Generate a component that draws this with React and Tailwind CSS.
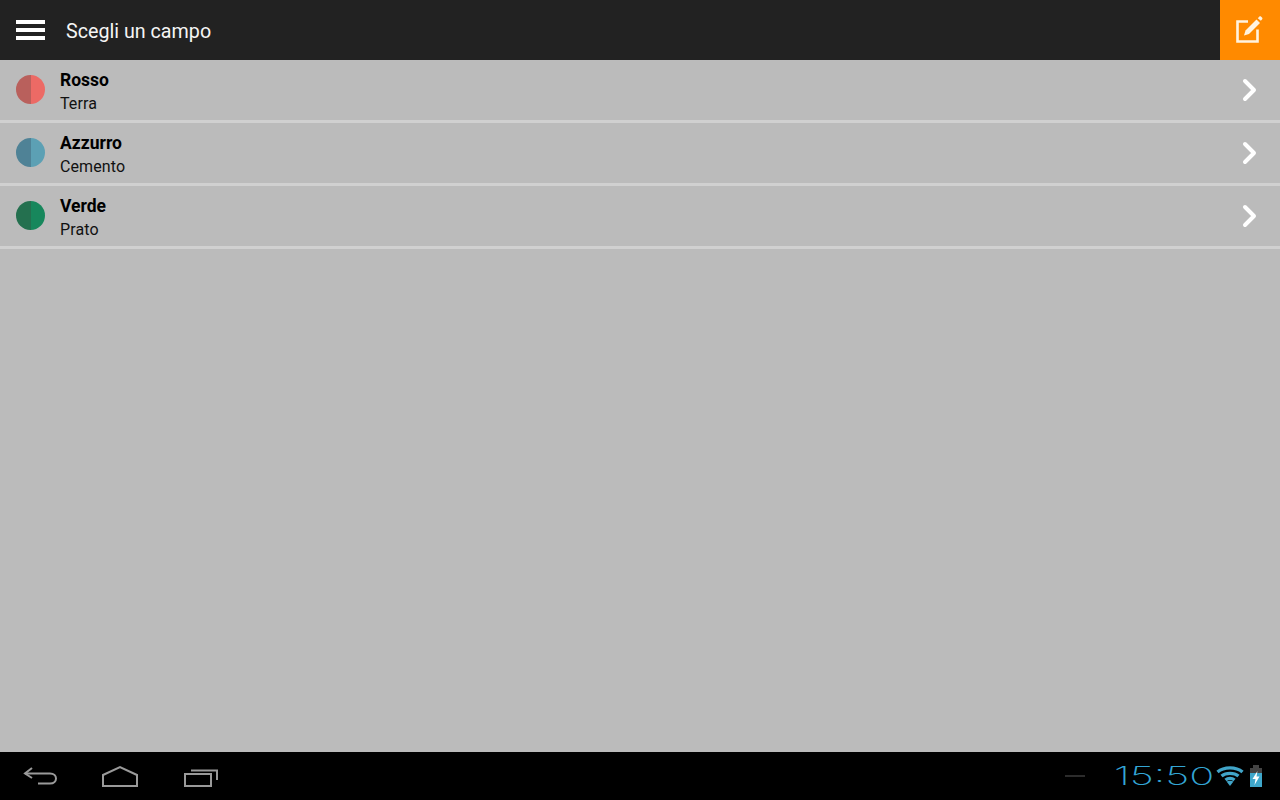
const rows = [
  { name: "Rosso", sub: "Terra", left: "bg-[#b9605c]", right: "bg-[#ec6a65]" },
  { name: "Azzurro", sub: "Cemento", left: "bg-[#4f8296]", right: "bg-[#5ca0b4]" },
  { name: "Verde", sub: "Prato", left: "bg-[#24704f]", right: "bg-[#17875c]" },
];

const App = () => {
  return (
    <div className="w-[1280px] h-[800px] flex flex-col overflow-hidden bg-[#bbbbbb] font-['Roboto',sans-serif]">
      {/* Action bar */}
      <div className="h-[60px] flex items-center bg-[#222222] shrink-0">
        <div className="w-[29px] ml-4 flex flex-col gap-[4px]">
          <div className="h-[4px] bg-white" />
          <div className="h-[4px] bg-white" />
          <div className="h-[4px] bg-white" />
        </div>
        <span className="ml-[21px] pt-[4px] text-[19.7px] text-[#f5f5f5]">Scegli un campo</span>
        <div className="ml-auto w-[60px] h-[60px] bg-[#ff8a00] flex items-center justify-center pr-[4px]">
          <svg width="30" height="30" viewBox="0 0 30 30" fill="none" className="text-[#fff3e0]">
            <path d="M15 6.5H4.5V26.5H24.5V14.5" stroke="currentColor" strokeWidth="2.6" />
            <path d="M11 20.5L12.5 15.5L23.5 4.5L27 8L16 19Z" fill="currentColor" />
            <path d="M24.8 3.2L26.2 1.8C26.8 1.2 27.6 1.2 28.2 1.8L29 2.6C29.6 3.2 29.600 4 29 4.6L27.8 5.8Z" fill="currentColor" />
          </svg>
        </div>
      </div>

      {/* List */}
      <div className="flex-1 flex flex-col">
        {rows.map((r) => (
          <div key={r.name} className="h-[63px] flex items-center pl-4 pr-[20px] pb-[1px] border-b-[3px] border-[#d0d0d0]">
            <div className="w-[29px] h-[29px] rounded-full overflow-hidden flex">
              <div className={`w-1/2 ${r.left}`} />
              <div className={`w-1/2 ${r.right}`} />
            </div>
            <div className="ml-[15px] flex flex-col pt-[5px]">
              <span className="text-[17.5px] leading-[23px] font-bold text-black">{r.name}</span>
              <span className="text-[16px] leading-[23px] tracking-[0.1px] text-[#111111]">{r.sub}</span>
            </div>
            <svg width="20" height="24" viewBox="0 0 20 24" fill="none" className="ml-auto">
              <path d="M5 3L14 12L5 21" stroke="white" strokeWidth="4" strokeLinecap="round" strokeLinejoin="round" />
            </svg>
          </div>
        ))}
      </div>

      {/* System bar */}
      <div className="h-[48px] flex items-center bg-black shrink-0">
        <svg width="36" height="24" viewBox="0 0 36 24" fill="none" className="ml-[23px]" stroke="#9a9a9a" strokeWidth="2">
          <path d="M9 4L2 9.5L9 14" />
          <path d="M2 9.5H27C35 9.5 35 19.5 27 19.5H15" />
        </svg>
        <svg width="38" height="24" viewBox="0 0 38 24" fill="none" className="ml-[42px]" stroke="#9a9a9a" strokeWidth="2">
          <path d="M2 11L19 3L36 11V22H2Z" />
        </svg>
        <svg width="36" height="24" viewBox="0 0 36 24" fill="none" className="ml-[44px]" stroke="#9a9a9a" strokeWidth="2">
          <path d="M2 10H28V22H2Z" />
          <path d="M8 6.5H34V16" />
        </svg>
        <div className="ml-auto flex items-center">
          <div className="w-[20px] h-[2px] bg-[#2c2c2c] mr-[29px]" />
          <div className="w-[98px] pt-[4px]">
            <span className="inline-block origin-left scale-x-[1.66] text-[25px] leading-none text-[#33a5d4] font-['Inter'] font-extralight">15:50</span>
          </div>
          <svg width="28" height="22" viewBox="0 0 28 22" fill="none" className="ml-[4px]" stroke="#41a5c9" strokeWidth="3.4">
            <path d="M1.500 7C8 1.500 20 1.500 26.500 7" />
            <path d="M5.500 11C10 7.500 18 7.500 22.500 11" />
            <path d="M9.500 15C12 13 16 13 18.500 15" />
            <path d="M10.500 16.500L14 21L17.500 16.500C15.500 15.500 12.500 15.500 10.500 16.500Z" fill="#41a5c9" stroke="none" />
          </svg>
          <svg width="14" height="22" viewBox="0 0 14 22" className="ml-[5px] mr-[17px]">
            <rect x="4" y="0" width="6" height="3" fill="#444444" />
            <rect x="1" y="3" width="12" height="5" fill="#444444" />
            <rect x="1" y="8" width="12" height="14" fill="#3fa7cb" />
            <path d="M8.500 6L3.500 14H6.500L5.500 20L10.500 11.500H7.500Z" fill="white" />
          </svg>
        </div>
      </div>
    </div>
  );
};

export default App;
